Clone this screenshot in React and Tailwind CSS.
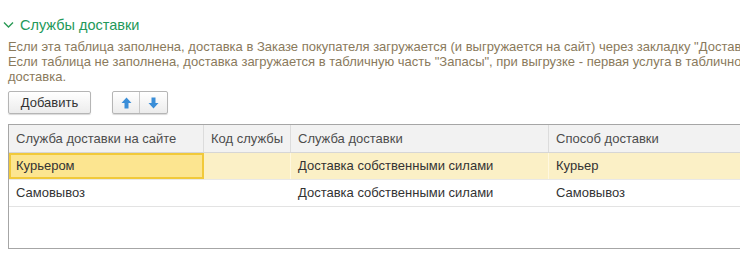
import React from "react";

const font = { fontFamily: '"Liberation Sans", Arial, sans-serif' };

function Chevron() {
  return (
    <svg width="11" height="8" viewBox="0 0 11 8" className="block">
      <path d="M1 1.5 L5.5 6 L10 1.5" fill="none" stroke="#2a9a55" strokeWidth="1.4" />
    </svg>
  );
}

function ArrowUp() {
  return (
    <svg width="11" height="12" viewBox="0 0 11 12" className="block">
      <path d="M5.5 0.5 L10.5 6 L7.5 6 L7.5 11.5 L3.5 11.5 L3.5 6 L0.5 6 Z" fill="#3a8ed8" />
    </svg>
  );
}

function ArrowDown() {
  return (
    <svg width="11" height="12" viewBox="0 0 11 12" className="block">
      <path d="M5.5 11.5 L10.5 6 L7.5 6 L7.5 0.5 L3.5 0.5 L3.5 6 L0.5 6 Z" fill="#3a8ed8" />
    </svg>
  );
}

export default function App() {
  const cols = ["w-[195px]", "w-[87px]", "w-[258px]", "flex-1"];
  const header = ["Служба доставки на сайте", "Код службы", "Служба доставки", "Способ доставки"];
  const rows = [
    ["Курьером", "", "Доставка собственными силами", "Курьер"],
    ["Самовывоз", "", "Доставка собственными силами", "Самовывоз"],
  ];
  return (
    <div style={font} className="w-[740px] h-[262px] bg-white overflow-hidden relative">
      <div className="pt-[15px] pl-[3px] flex items-center gap-[6px]">
        <Chevron />
        <span className="text-[14.5px] leading-[20px] text-[#23995a]">Службы доставки</span>
      </div>
      <div className="pl-[8px] pt-[4px] text-[13px] leading-[15px] text-[#8a7a5c] whitespace-nowrap">
        <div>Если эта таблица заполнена, доставка в Заказе покупателя загружается (и выгружается на сайт) через закладку "Доставка"</div>
        <div>Если таблица не заполнена, доставка загружается в табличную часть "Запасы", при выгрузке - первая услуга в табличной части</div>
        <div>доставка.</div>
      </div>
      <div className="pl-[8px] pt-[7px] flex items-center">
        <button className="w-[83px] h-[23px] border border-[#b5b5b5] rounded-[2px] bg-gradient-to-b from-white to-[#ececec] shadow-[0_1px_1px_rgba(0,0,0,0.15)] text-[13px] text-[#333] flex items-center justify-center">
          Добавить
        </button>
        <div className="ml-[21px] h-[23px] flex border border-[#b5b5b5] rounded-[2px] bg-gradient-to-b from-white to-[#ececec] shadow-[0_1px_1px_rgba(0,0,0,0.15)]">
          <div className="w-[27px] flex items-center justify-center border-r border-[#c8c8c8]"><ArrowUp /></div>
          <div className="w-[27px] flex items-center justify-center"><ArrowDown /></div>
        </div>
      </div>
      <div className="ml-[8px] mt-[10px] w-[760px] h-[125px] border border-[#a6a6a6] text-[13px]">
        <div className="flex h-[28px] bg-[#f2f2f2] border-b border-[#d6d6d6] text-[#4d4d4d]">
          {header.map((h, i) => (
            <div key={i} className={`${cols[i]} ${i < 3 ? "border-r border-[#dcdcdc]" : ""} flex items-center pl-[7px]`}>
              {h}
            </div>
          ))}
        </div>
        <div className="flex h-[27px] bg-[#fbf0c6] border-b border-[#e8e8e8] text-[#333]">
          <div className={`${cols[0]} bg-[#fce590] border-2 border-[#f1c93a] flex items-center pl-[5px]`}>{rows[0][0]}</div>
          <div className={`${cols[1]} border-r border-[#fff8e0] flex items-center pl-[7px]`}>{rows[0][1]}</div>
          <div className={`${cols[2]} border-r border-[#fff8e0] flex items-center pl-[7px]`}>{rows[0][2]}</div>
          <div className={`${cols[3]} flex items-center pl-[7px]`}>{rows[0][3]}</div>
        </div>
        <div className="flex h-[27px] bg-white border-b border-[#e3e3e3] text-[#333]">
          {rows[1].map((c, i) => (
            <div key={i} className={`${cols[i]} flex items-center pl-[7px]`}>{c}</div>
          ))}
        </div>
      </div>
    </div>
  );
}
